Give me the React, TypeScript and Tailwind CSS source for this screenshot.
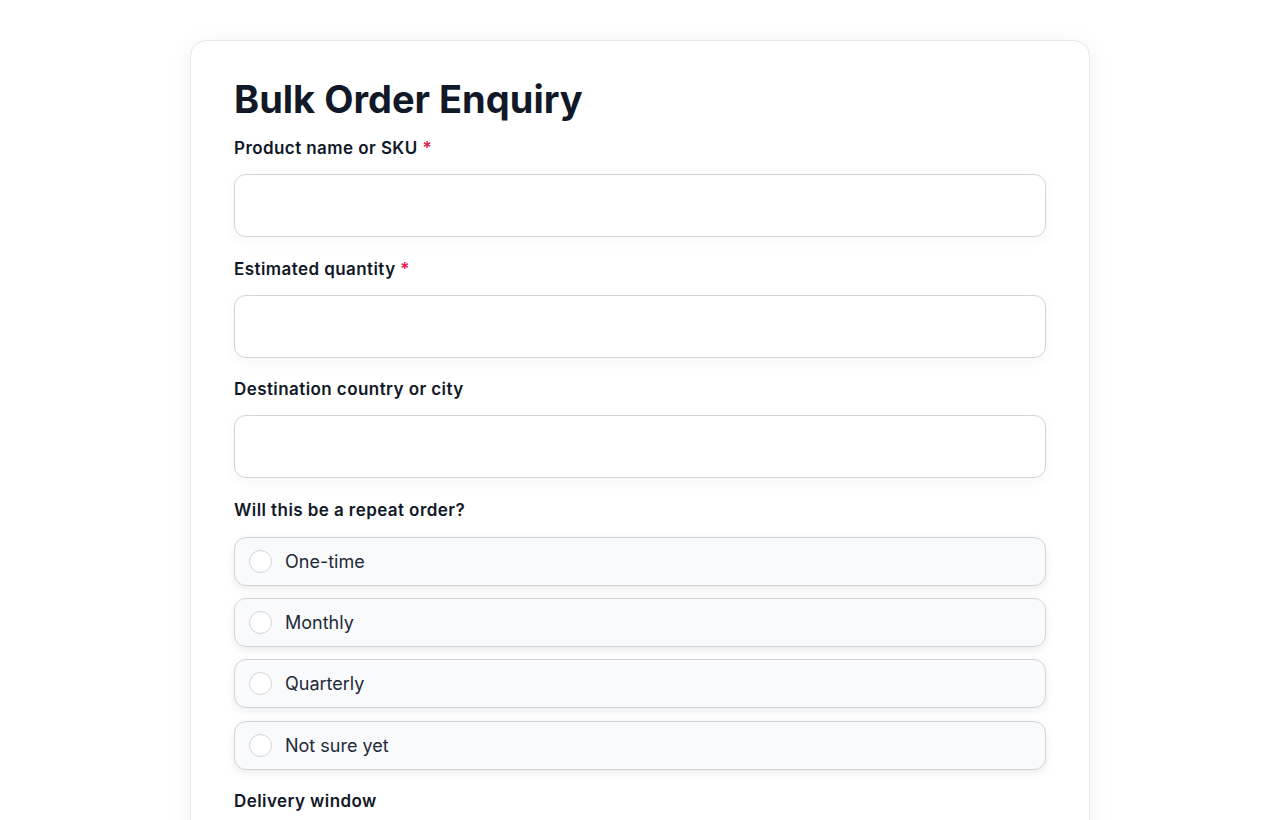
import React from "react";

const font = { fontFamily: "Inter, 'Noto Sans', sans-serif" };

function Field({ label, required }: { label: string; required?: boolean }) {
  return (
    <div className="mb-[19.5px]">
      <label className="block text-[17px] leading-[24px] font-semibold tracking-[0.025em] text-[#111827]">
        {label}
        {required && <span className="text-[#e11d48]"> *</span>}
      </label>
      <input
        type="text"
        className="mt-[14px] block w-full h-[63px] rounded-[12px] border border-[#d1d5db] bg-white px-4 text-[17px] shadow-[0_4px_14px_rgba(17,24,39,0.04)] outline-none"
      />
    </div>
  );
}

function Radio({ label }: { label: string }) {
  return (
    <label className="flex items-center h-[49px] rounded-[12px] border border-[#d1d5db] bg-[#f9fafb] pl-[14px] shadow-[0_3px_8px_rgba(17,24,39,0.08)]">
      <span className="block w-[23px] h-[23px] rounded-full border border-[#d1d5db] bg-white" />
      <span className="ml-[13px] text-[18px] text-[#1f2937]">{label}</span>
    </label>
  );
}

export default function App() {
  return (
    <div className="min-h-screen bg-white" style={font}>
      <div className="pt-[40px] flex justify-center">
        <div className="w-[900px] rounded-[16px] border border-[#e5e7eb] bg-white px-[43px] pt-[35px] pb-10 shadow-[0_4px_24px_rgba(17,24,39,0.06)]">
          <h1 className="text-[38px] leading-[46px] font-bold text-[#111827] mb-[14px]">
            Bulk Order Enquiry
          </h1>
          <Field label="Product name or SKU" required />
          <Field label="Estimated quantity" required />
          <Field label="Destination country or city" />
          <div className="mb-[19px]">
            <div className="text-[17px] leading-[24px] font-semibold tracking-[0.025em] text-[#111827]">
              Will this be a repeat order?
            </div>
            <div className="mt-[15px] flex flex-col gap-[12.4px]">
              <Radio label="One-time" />
              <Radio label="Monthly" />
              <Radio label="Quarterly" />
              <Radio label="Not sure yet" />
            </div>
          </div>
          <Field label="Delivery window" />
        </div>
      </div>
    </div>
  );
}
